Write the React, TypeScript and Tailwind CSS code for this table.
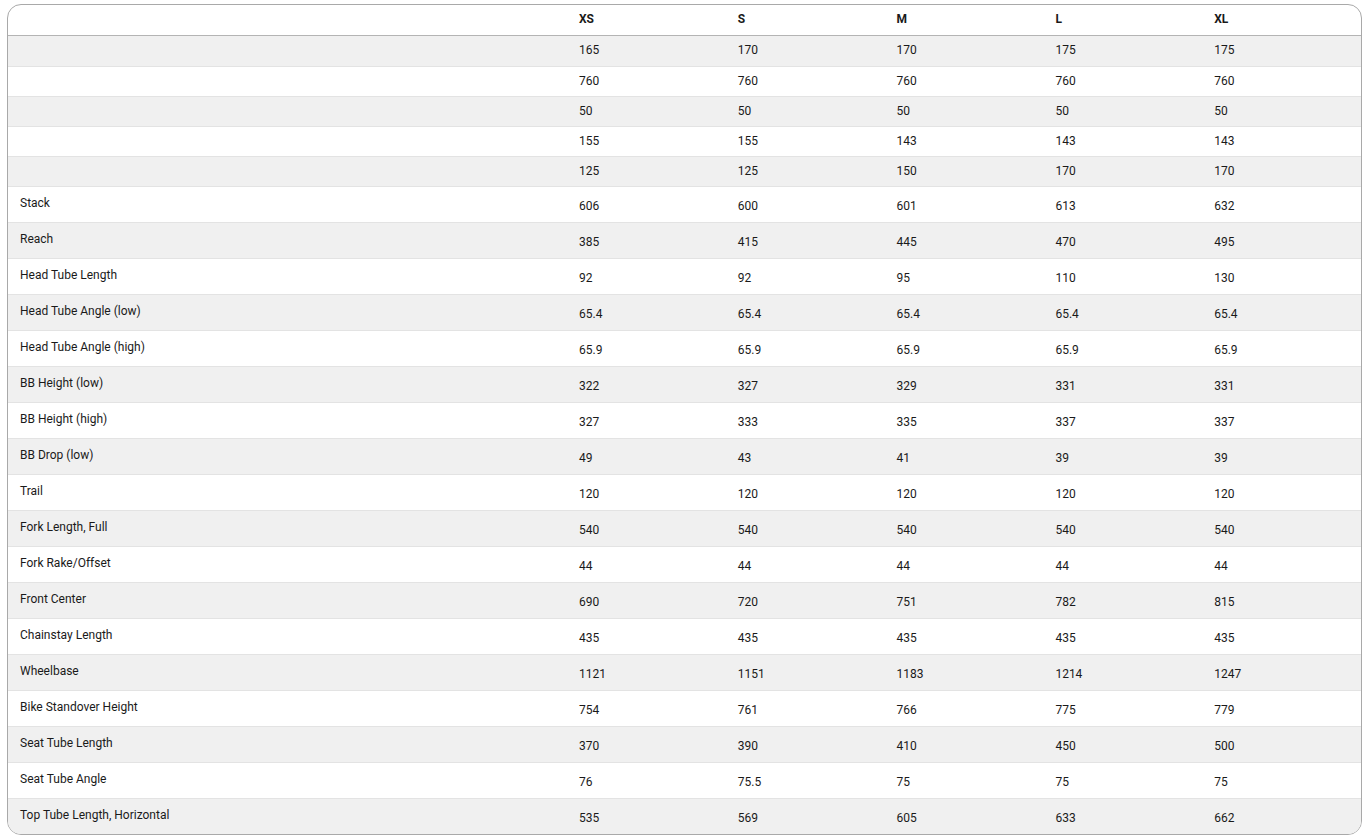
const SIZES = ["XS", "S", "M", "L", "XL"];

type Row = { label: string; values: string[] };

const TOP_ROWS: Row[] = [
  { label: "", values: ["165", "170", "170", "175", "175"] },
  { label: "", values: ["760", "760", "760", "760", "760"] },
  { label: "", values: ["50", "50", "50", "50", "50"] },
  { label: "", values: ["155", "155", "143", "143", "143"] },
  { label: "", values: ["125", "125", "150", "170", "170"] },
];

const GEO_ROWS: Row[] = [
  { label: "Stack", values: ["606", "600", "601", "613", "632"] },
  { label: "Reach", values: ["385", "415", "445", "470", "495"] },
  { label: "Head Tube Length", values: ["92", "92", "95", "110", "130"] },
  { label: "Head Tube Angle (low)", values: ["65.4", "65.4", "65.4", "65.4", "65.4"] },
  { label: "Head Tube Angle (high)", values: ["65.9", "65.9", "65.9", "65.9", "65.9"] },
  { label: "BB Height (low)", values: ["322", "327", "329", "331", "331"] },
  { label: "BB Height (high)", values: ["327", "333", "335", "337", "337"] },
  { label: "BB Drop (low)", values: ["49", "43", "41", "39", "39"] },
  { label: "Trail", values: ["120", "120", "120", "120", "120"] },
  { label: "Fork Length, Full", values: ["540", "540", "540", "540", "540"] },
  { label: "Fork Rake/Offset", values: ["44", "44", "44", "44", "44"] },
  { label: "Front Center", values: ["690", "720", "751", "782", "815"] },
  { label: "Chainstay Length", values: ["435", "435", "435", "435", "435"] },
  { label: "Wheelbase", values: ["1121", "1151", "1183", "1214", "1247"] },
  { label: "Bike Standover Height", values: ["754", "761", "766", "775", "779"] },
  { label: "Seat Tube Length", values: ["370", "390", "410", "450", "500"] },
  { label: "Seat Tube Angle", values: ["76", "75.5", "75", "75", "75"] },
  { label: "Top Tube Length, Horizontal", values: ["535", "569", "605", "633", "662"] },
];

const GRID = "grid grid-cols-[559px_repeat(5,minmax(0,1fr))]";

export default function App() {
  return (
    <div className="min-h-[839px] bg-white pt-[4px] pl-[7px] pr-[2px] pb-[5px] font-['Roboto',sans-serif] text-[12px] text-[#1a1a1a]">
      <div className="overflow-hidden rounded-[14px] border border-[#a9a9a9] bg-white">
        {/* header */}
        <div className={`${GRID} h-[31px] border-b border-[#b4b4b4]`}>
          <div />
          {SIZES.map((s) => (
            <div key={s} className="flex items-center px-3 pb-[3px] font-bold">
              {s}
            </div>
          ))}
        </div>

        {TOP_ROWS.map((row, i) => (
          <div
            key={i}
            className={`${GRID} h-[30px] ${i > 0 ? "border-t border-[#e3e3e3]" : ""} ${i % 2 === 0 ? "bg-[#f0f0f0]" : "bg-white"}`}
          >
            <div className="px-3" />
            {row.values.map((v, j) => (
              <div key={j} className="flex items-center px-3 pb-[2px]">
                {v}
              </div>
            ))}
          </div>
        ))}

        {GEO_ROWS.map((row, i) => (
          <div
            key={row.label}
            className={`${GRID} h-[36px] border-t border-[#e3e3e3] ${i % 2 === 0 ? "bg-white" : "bg-[#f0f0f0]"}`}
          >
            <div className="flex items-center px-3 pb-[4px]">{row.label}</div>
            {row.values.map((v, j) => (
              <div key={j} className="flex items-center px-3 pt-[2px]">
                {v}
              </div>
            ))}
          </div>
        ))}
      </div>
    </div>
  );
}
